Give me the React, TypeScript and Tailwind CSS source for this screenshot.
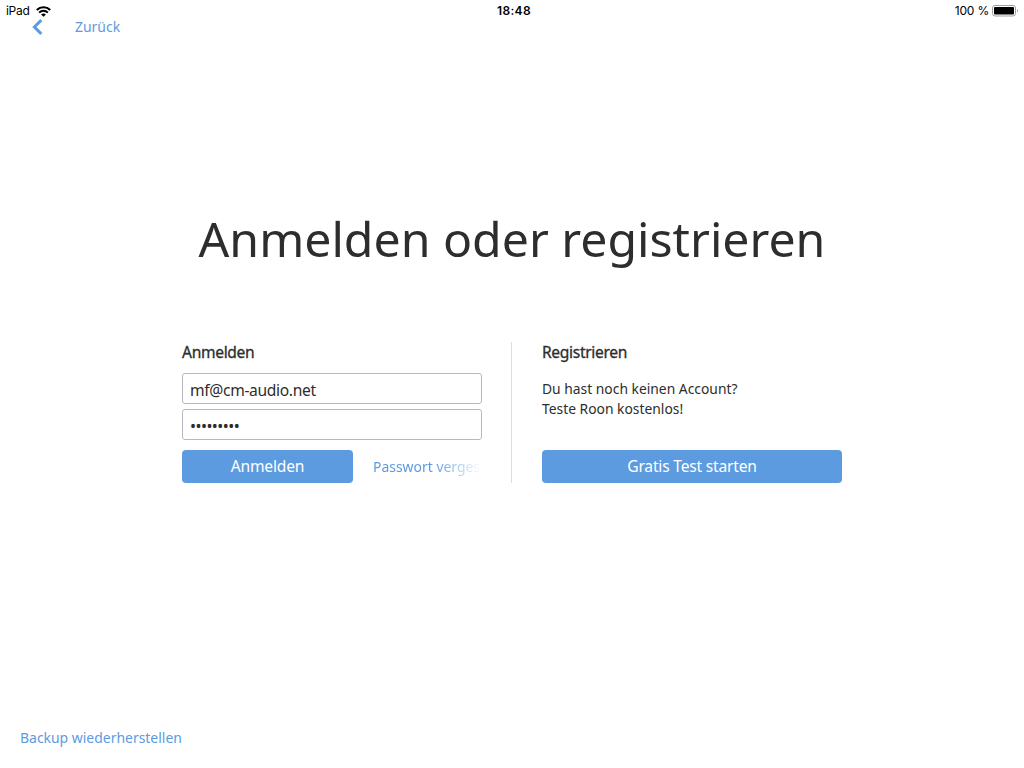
import clsx from "clsx";
import { useState } from "react";

type LinkButtonProps = {
  children: string;
  className?: string;
};

const LinkButton = ({ children, className }: LinkButtonProps) => (
  <button
    type="button"
    className={clsx(
      "block cursor-pointer text-[13.95px] leading-5 whitespace-nowrap text-[#5c9be0]",
      className,
    )}
  >
    {children}
  </button>
);

const SectionTitle = ({ children }: { children: string }) => (
  <h2 className="text-[15.6px] leading-5 font-normal tracking-[-0.33px] text-[#2d2d2d] [-webkit-text-stroke:0.3px_#2d2d2d]">
    {children}
  </h2>
);

const WifiIcon = () => (
  <svg width="15" height="11" viewBox="0 0 15 11" fill="none" stroke="#000">
    <path d="M0.8 4 C4.5 0.3 10.5 0.3 14.2 4" strokeWidth="2.2" />
    <path d="M3.1 6.6 C5.6 4.2 9.4 4.2 11.9 6.6" strokeWidth="2" />
    <path d="M7.5 10.8 L5.1 8.5 C6.5 7.3 8.5 7.3 9.9 8.5 Z" fill="#000" stroke="none" />
  </svg>
);

const BatteryIcon = () => (
  <svg width="27" height="12" viewBox="0 0 27 12">
    <rect x="0.5" y="0.5" width="23" height="10.5" rx="2.5" fill="none" stroke="#a0a0a0" />
    <rect x="2" y="2" width="20" height="7.5" rx="1" fill="#000" />
    <path d="M25 4 C26.3 4.4 26.3 7.1 25 7.5 Z" fill="#a0a0a0" />
  </svg>
);

const StatusBar = () => (
  <div className="grid h-5 grid-cols-3 items-center pt-px pr-[5px] pl-1.5 font-['Inter',sans-serif] text-[12px] leading-5 text-black">
    <div className="flex items-center gap-[7px]">
      <span className="tracking-[-0.3px]">iPad</span>
      <WifiIcon />
    </div>
    <span className="pl-[3px] text-center font-semibold tracking-[0.3px]">18:48</span>
    <div className="flex items-center justify-end gap-[3px]">
      <span className="tracking-[-0.2px]">100 %</span>
      <BatteryIcon />
    </div>
  </div>
);

const inputStyles =
  "h-[31px] w-full rounded-[3px] border border-[#b5b8be] bg-white px-[7px] text-[#2d2d2d] outline-none";

const buttonStyles =
  "h-[33px] shrink-0 rounded-[4px] bg-[#5c9be0] text-[15.6px] tracking-[-0.2px] text-white";

const App = () => {
  const [email, setEmail] = useState("mf@cm-audio.net");
  const [password, setPassword] = useState("•••••••••");

  return (
    <div className="flex h-screen flex-col overflow-hidden bg-white font-['Noto_Sans',sans-serif] text-[#2d2d2d]">
      <StatusBar />
      <div className="-mt-0.5 flex h-[18px] items-center pl-8">
        <svg width="11" height="16" viewBox="0 0 11 16" fill="none" stroke="#5c9be0" strokeWidth="3">
          <path d="M9.3 1.1 L2.4 8 L9.3 14.9" />
        </svg>
        <LinkButton className="ml-8">Zurück</LinkButton>
      </div>

      <main className="mt-[151px] flex flex-col items-center">
        <h1 className="text-[48.2px] leading-[103px] whitespace-nowrap">
          Anmelden oder registrieren
        </h1>
        <div className="mt-[52px] flex h-[141px] w-[660px]">
          <form className="flex w-[300px] flex-col" onSubmit={(e) => e.preventDefault()}>
            <SectionTitle>Anmelden</SectionTitle>
            <input
              className={clsx(inputStyles, "mt-[11px] pt-[3px] text-[15.6px] tracking-[-0.33px]")}
              value={email}
              onChange={(e) => setEmail(e.target.value)}
            />
            <input
              className={clsx(inputStyles, "mt-[5px] pt-[3px] text-[16px] tracking-[-0.55px]")}
              value={password}
              onChange={(e) => setPassword(e.target.value)}
            />
            <div className="mt-2.5 flex h-[33px] items-center">
              <button className={clsx(buttonStyles, "w-[171px]")}>Anmelden</button>
              <div className="ml-5 w-[109px] overflow-hidden [mask-image:linear-gradient(to_right,#000_55%,transparent)]">
                <LinkButton>Passwort vergessen?</LinkButton>
              </div>
            </div>
          </form>

          <div className="ml-[29px] h-full w-px bg-[#dcdde0]" />

          <section className="ml-[30px] flex w-[300px] flex-col">
            <SectionTitle>Registrieren</SectionTitle>
            <p className="mt-[17px] text-[13.85px] leading-[19.5px]">
              Du hast noch keinen Account?
              <br />
              Teste Roon kostenlos!
            </p>
            <button className={clsx(buttonStyles, "mt-auto w-full")}>Gratis Test starten</button>
          </section>
        </div>
      </main>

      <footer className="mt-auto flex pb-5 pl-5">
        <LinkButton>Backup wiederherstellen</LinkButton>
      </footer>
    </div>
  );
};

export default App;
